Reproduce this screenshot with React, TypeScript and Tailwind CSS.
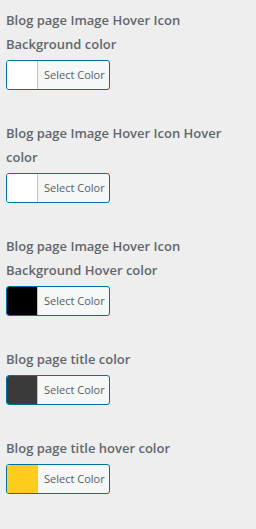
import React from 'react';

type ColorField = {
    label: string;
    color: string;
};

const fields: ColorField[] = [
    { label: 'Blog page Image Hover Icon Background color', color: '#ffffff' },
    { label: 'Blog page Image Hover Icon Hover color', color: '#ffffff' },
    { label: 'Blog page Image Hover Icon Background Hover color', color: '#000000' },
    { label: 'Blog page title color', color: '#3a3a3a' },
    { label: 'Blog page title hover color', color: '#fccd1c' },
];

const ColorPicker: React.FC<{ color: string }> = ({ color }) => (
    <button
        type="button"
        className="mt-1 flex h-[30px] w-[104px] overflow-hidden rounded-[3px] border border-[#0071a1] bg-[#f6f7f7] p-0"
    >
        <span className="block h-full w-[30px]" style={{ backgroundColor: color }} />
        <span className="flex h-full flex-1 items-center border-l border-[#c3c4c7] pl-[6px] text-[11px] text-[#555d66]">
            Select Color
        </span>
    </button>
);

export default function App() {
    return (
        <div className="min-h-[529px] w-[256px] bg-[#eeeeee] px-[6px] pt-2 font-['Open_Sans',sans-serif]">
            <div className="flex w-[240px] flex-col gap-[31px]">
                {fields.map(field => (
                    <div key={field.label}>
                        <div className="text-[13px] font-semibold leading-6 text-[#62676d]">{field.label}</div>
                        <ColorPicker color={field.color} />
                    </div>
                ))}
            </div>
        </div>
    );
}
